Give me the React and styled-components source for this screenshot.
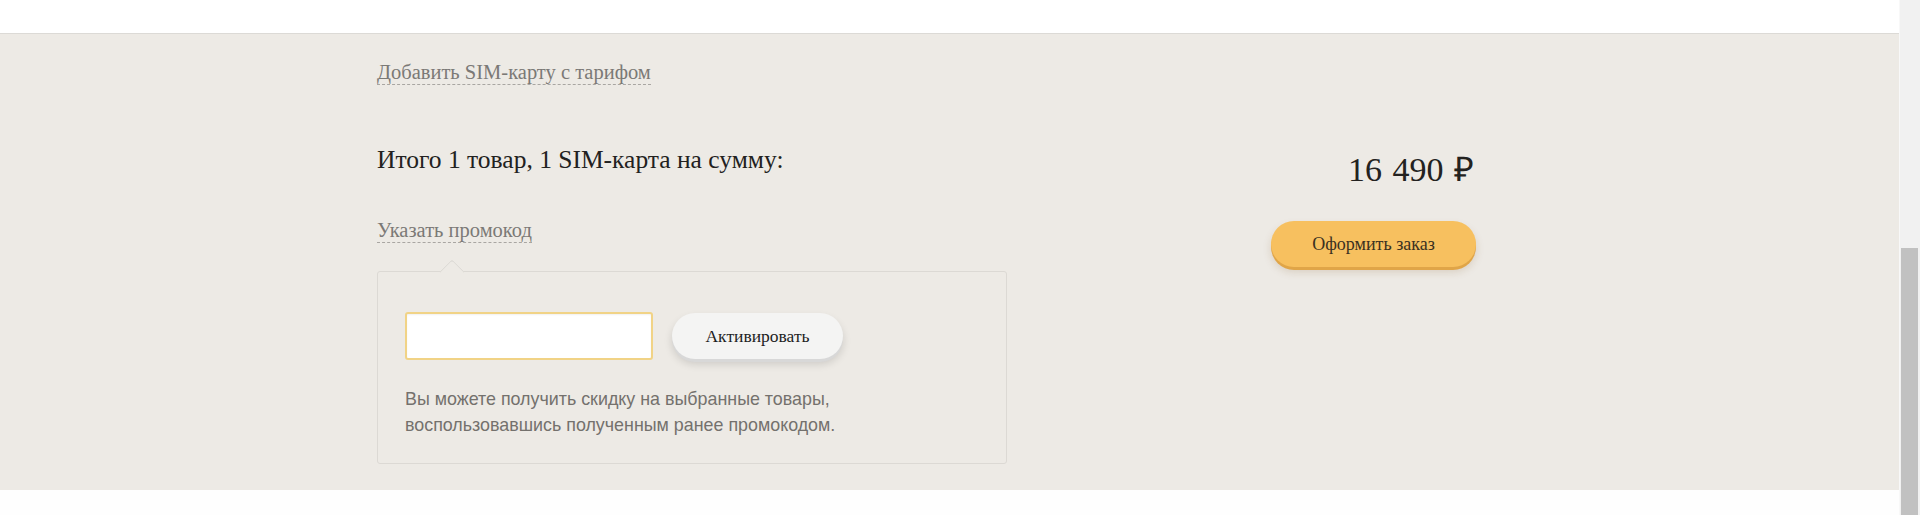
import React from "react";
import styled, { createGlobalStyle } from "styled-components";

const GlobalStyle = createGlobalStyle`
  html, body { margin: 0; padding: 0; background: #fefefe; }
  body { font-family: "Liberation Serif", serif; }
  * { box-sizing: border-box; }
`;

const Screen = styled.div`
  display: flex;
  width: 1920px;
  height: 515px;
  overflow: hidden;
`;

const Page = styled.div`
  flex: 1;
  display: flex;
  flex-direction: column;
  background: #fefefe;
`;

const TopStrip = styled.div`
  flex-shrink: 0;
  height: 33px;
  background: #ffffff;
`;

const Summary = styled.section`
  flex-shrink: 0;
  background: #edeae5;
  border-top: 1px solid #dcdad6;
  padding: 26px 0 26px;
`;

const Container = styled.div`
  width: 1145px;
  margin: 0 auto;
  padding-right: 46px;
  display: flex;
  justify-content: space-between;
`;

const LeftCol = styled.div`
  width: 630px;
  display: flex;
  flex-direction: column;
  align-items: flex-start;
`;

const DashedLink = styled.a`
  display: inline-block;
  font-family: "Liberation Serif", serif;
  font-size: 20.5px;
  line-height: 24px;
  color: #7b7976;
  border-bottom: 1px dashed #a9a6a2;
  text-decoration: none;
  cursor: pointer;
  margin-top: ${(p) => p.$gap || 0}px;
`;

const TotalTitle = styled.h2`
  margin: 60px 0 0;
  font-family: "Liberation Serif", serif;
  font-weight: normal;
  font-size: 25.5px;
  line-height: 30px;
  color: #222120;
`;

const PromoBox = styled.div`
  position: relative;
  width: 630px;
  margin-top: 28px;
  border: 1px solid #dcd9d4;
  border-radius: 3px;
  padding: 40px 28px 25px 27px;

  &::before {
    content: "";
    position: absolute;
    top: -9px;
    left: 65px;
    width: 17px;
    height: 17px;
    background: #edeae5;
    border-top: 1px solid #dcd9d4;
    border-left: 1px solid #dcd9d4;
    border-top-left-radius: 3px;
    transform: rotate(45deg);
  }
`;

const PromoRow = styled.div`
  display: flex;
  align-items: flex-start;
  gap: 19px;
`;

const PromoInput = styled.input`
  width: 248px;
  height: 48px;
  border: 2px solid #f1d386;
  border-radius: 3px;
  background: #ffffff;
  box-shadow: inset 0 1px 2px rgba(0, 0, 0, 0.06);
  outline: none;
  padding: 0 12px;
  font-family: "Liberation Sans", sans-serif;
  font-size: 18px;
`;

const PillButton = styled.button`
  height: 46px;
  width: ${(p) => p.$w}px;
  margin-top: ${(p) => p.$mt || 0}px;
  border: none;
  border-radius: 23px;
  background: ${(p) => (p.$primary ? "#f7c05f" : "#f4f4f3")};
  box-shadow: ${(p) =>
    p.$primary
      ? "0 3px 0 #e0a548, 0 5px 8px rgba(120, 80, 20, 0.18)"
      : "0 3px 0 #d8d8d8, 0 5px 8px rgba(0, 0, 0, 0.14)"};
  font-family: "Liberation Serif", serif;
  font-size: ${(p) => (p.$primary ? 18 : 17.5)}px;
  color: ${(p) => (p.$primary ? "#3b3121" : "#1d1d1d")};
  cursor: pointer;
  padding: 0;
`;

const Hint = styled.p`
  margin: 26px 0 0;
  font-family: "Liberation Sans", sans-serif;
  font-size: 19px;
  line-height: 26px;
  color: #74716d;
  white-space: nowrap;
  transform: scaleX(0.94);
  transform-origin: left top;
`;

const RightCol = styled.div`
  display: flex;
  flex-direction: column;
  align-items: flex-end;
  padding-top: 90px;
`;

const Price = styled.div`
  font-family: "Liberation Serif", serif;
  font-size: 34px;
  line-height: 39px;
  word-spacing: 2px;
  color: #232220;
  padding-right: 2px;
`;

const BottomStrip = styled.div`
  flex: 1;
  background: #fefefe;
`;

const ScrollTrack = styled.div`
  width: 21px;
  display: flex;
  flex-direction: column;
  background: #f1f1f1;
  border-left: 1px solid #f8f8f8;
`;

const ScrollThumb = styled.div`
  flex: 1;
  margin: 248px 2px 0 1px;
  background: #c1c1c1;
`;

export default function App() {
  return (
    <>
      <GlobalStyle />
      <Screen>
        <Page>
          <TopStrip />
          <Summary>
            <Container>
              <LeftCol>
                <DashedLink>Добавить SIM-карту с тарифом</DashedLink>
                <TotalTitle>Итого 1 товар, 1 SIM-карта на сумму:</TotalTitle>
                <DashedLink $gap={43}>Указать промокод</DashedLink>
                <PromoBox>
                  <PromoRow>
                    <PromoInput type="text" />
                    <PillButton $w={171} $mt={1}>Активировать</PillButton>
                  </PromoRow>
                  <Hint>
                    Вы можете получить скидку на выбранные товары,
                    <br />
                    воспользовавшись полученным ранее промокодом.
                  </Hint>
                </PromoBox>
              </LeftCol>
              <RightCol>
                <Price>16 490 ₽</Price>
                <PillButton $primary $w={205} $mt={32}>
                  Оформить заказ
                </PillButton>
              </RightCol>
            </Container>
          </Summary>
          <BottomStrip />
        </Page>
        <ScrollTrack>
          <ScrollThumb />
        </ScrollTrack>
      </Screen>
    </>
  );
}
